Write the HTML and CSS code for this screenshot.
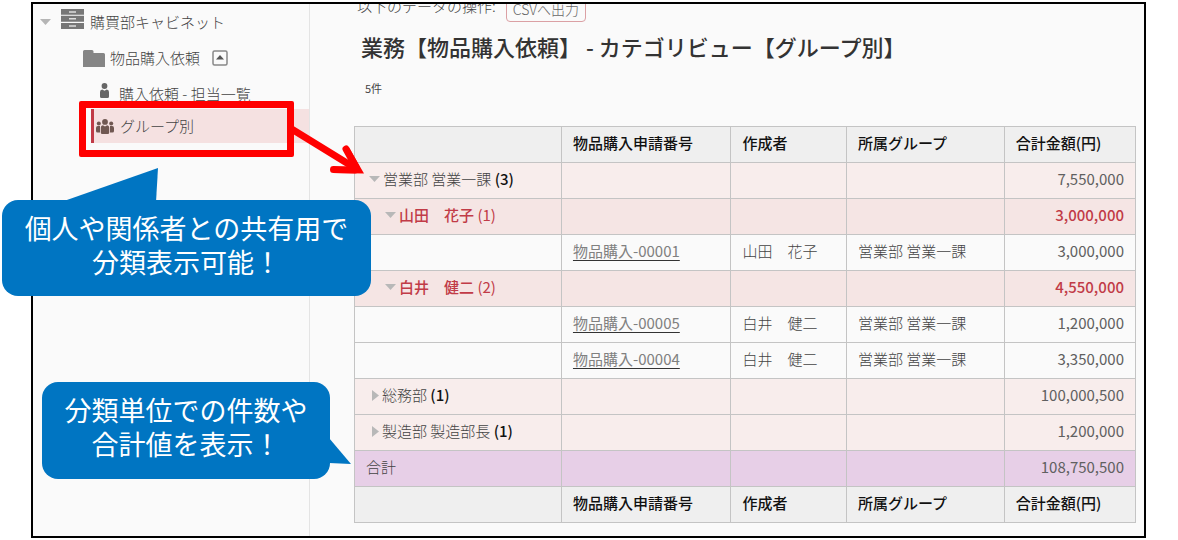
FILE: index.html
```html
<!DOCTYPE html>
<html lang="ja">
<head>
<meta charset="utf-8">
<title>業務【物品購入依頼】 - カテゴリビュー</title>
<link rel="stylesheet" href="styles.css">
</head>
<body>
<div class="stage">
  <div class="frame">
    <nav class="sidebar" aria-label="キャビネット">
      <a class="nav-item cabinet" href="#">
        <svg class="caret" width="11" height="6" viewBox="0 0 11 6"><path d="M0 0h11L5.500 6z" fill="#b5b5b5"/></svg>
        <svg class="icon-cabinet" width="23" height="20" viewBox="0 0 23 20"><path d="M0 0h23v5.800H0zM0 6.800h23v6H0zM0 14h23v6H0z" fill="#777"/><path d="M8 3h7M8 9.800h7M8 17h7" stroke="#ddd" stroke-width="1.500"/></svg>
        <span>購買部キャビネット</span>
      </a>
      <div class="nav-item folder">
        <svg width="22" height="17" viewBox="0 0 22 17"><path d="M0 1.500Q0 0 1.500 0H9q1.500 0 1.500 1.500V3H20.500Q22 3 22 4.500V17H0z" fill="#858585"/></svg>
        <a href="#">物品購入依頼</a>
        <button class="fold" type="button" aria-label="折りたたむ"><svg width="16" height="16" viewBox="0 0 16 16"><rect x="1" y="1" width="14" height="14" rx="1.500" fill="#fafafa" stroke="#888" stroke-width="1.500"/><path d="M4 9.500L8 5l4 4.500z" fill="#555"/></svg></button>
      </div>
      <a class="nav-item view" href="#">
        <svg class="person" width="9" height="15" viewBox="0 0 9 15" fill="#666"><circle cx="4.500" cy="3" r="2.900"/><path d="M0 9Q0 6.800 2.200 6.500L4.500 7.800l2.300-1.300Q9 6.800 9 9v4.500Q9 15 7.500 15h-6Q0 15 0 13.500z"/></svg>
        <span>購入依頼 - 担当一覧</span>
      </a>
      <a class="nav-item group" href="#" aria-current="page">
        <svg width="18" height="15" viewBox="0 0 18 15" fill="#705852"><circle cx="9" cy="2.900" r="2.900"/><circle cx="2.800" cy="4.500" r="2"/><circle cx="15.200" cy="4.500" r="2"/><path d="M4.800 8.500q0-2 2-2.200L9 7.600l2.200-1.300q2 .2 2 2.200v5q0 1.500-1.500 1.500H6.300q-1.500 0-1.500-1.500zM0 9q0-1.800 1.800-2H4v6.500H1.500Q0 13.500 0 12zM14 7h2.200q1.800.2 1.800 2v3q0 1.500-1.500 1.500H14z"/></svg>
        <span>グループ別</span>
      </a>
    </nav>
    <main class="content">
      <div class="toolbar"><span>以下のデータの操作:</span><button class="export" type="button">CSVへ出力</button></div>
      <h1 class="title">業務【物品購入依頼】 - カテゴリビュー【グループ別】</h1>
      <p class="count">5件</p>
      <table class="grid">
        <colgroup><col class="c-cat"><col class="c-no"><col class="c-author"><col class="c-group"><col class="c-sum"></colgroup>
        <thead><tr><th></th><th>物品購入申請番号</th><th>作成者</th><th>所属グループ</th><th>合計金額(円)</th></tr></thead>
        <tbody>
          <tr class="level1"><td class="cat"><svg class="down" width="11" height="6" viewBox="0 0 11 6"><path d="M0 0h11L5.500 6z"/></svg>営業部 営業一課 <b>(3)</b></td><td></td><td></td><td></td><td class="num">7,550,000</td></tr>
          <tr class="level2"><td class="cat"><svg class="down" width="11" height="6" viewBox="0 0 11 6"><path d="M0 0h11L5.500 6z"/></svg><b>山田　花子</b> (1)</td><td></td><td></td><td></td><td class="num">3,000,000</td></tr>
          <tr><td></td><td><a href="#">物品購入-00001</a></td><td>山田　花子</td><td>営業部 営業一課</td><td class="num">3,000,000</td></tr>
          <tr class="level2"><td class="cat"><svg class="down" width="11" height="6" viewBox="0 0 11 6"><path d="M0 0h11L5.500 6z"/></svg><b>白井　健二</b> (2)</td><td></td><td></td><td></td><td class="num">4,550,000</td></tr>
          <tr><td></td><td><a href="#">物品購入-00005</a></td><td>白井　健二</td><td>営業部 営業一課</td><td class="num">1,200,000</td></tr>
          <tr><td></td><td><a href="#">物品購入-00004</a></td><td>白井　健二</td><td>営業部 営業一課</td><td class="num">3,350,000</td></tr>
          <tr class="level1"><td class="cat"><svg class="right" width="7" height="11" viewBox="0 0 7 11"><path d="M0 0v11L7 5.500z"/></svg>総務部 <b>(1)</b></td><td></td><td></td><td></td><td class="num">100,000,500</td></tr>
          <tr class="level1"><td class="cat"><svg class="right" width="7" height="11" viewBox="0 0 7 11"><path d="M0 0v11L7 5.500z"/></svg>製造部 製造部長 <b>(1)</b></td><td></td><td></td><td></td><td class="num">1,200,000</td></tr>
          <tr class="total"><td>合計</td><td></td><td></td><td></td><td class="num">108,750,500</td></tr>
        </tbody>
        <tfoot><tr><th></th><th>物品購入申請番号</th><th>作成者</th><th>所属グループ</th><th>合計金額(円)</th></tr></tfoot>
      </table>
    </main>
  </div>
  <div class="highlight"></div>
  <svg class="arrow" width="84" height="60" viewBox="0 0 84 60"><path d="M5 10L70 50" stroke="#f00" stroke-width="7"/><path d="M48.500 51.500L70 52M61 31L71 49" fill="none" stroke="#f00" stroke-width="7" stroke-linecap="round"/><path d="M64 29.500L79 55.500L48 55L66 48z" fill="#f00"/></svg>
  <div class="callout callout-share">
    <svg class="tail" width="96" height="34" viewBox="0 0 96 34"><path d="M0 33L94 0L92 34H0z" fill="#0075c2"/></svg>
    個人や関係者との共有用で<br>分類表示可能！
  </div>
  <div class="callout callout-count">
    <svg class="tail" width="23" height="28" viewBox="0 0 23 28"><path d="M0 0L22 26L0 25z" fill="#0075c2"/></svg>
    分類単位での件数や<br>合計値を表示！
  </div>
</div>
</body>
</html>
```
FILE: styles.css
```css
* { box-sizing: border-box; }
body {
  margin: 0;
  background: #fff;
  color: #444;
  font: 300 15px/20px "Noto Sans CJK JP", sans-serif;
}
a { color: inherit; }
button { font: inherit; color: inherit; }
.stage { position: relative; padding: 2px 32px 2px 31px; }
.frame {
  display: flex;
  border: 2px solid #000;
  background: #fafafa;
}
.sidebar {
  flex: 0 0 277px;
  border-right: 1px solid #e4e4e4;
  padding-top: 2px;
}
.nav-item {
  display: flex;
  align-items: center;
  height: 36px;
  text-decoration: none;
  white-space: nowrap;
}
.nav-item a { text-decoration: none; }
.cabinet { padding-left: 7px; height: 32px; }
.icon-cabinet { margin: 0 6px 6px 10px; }
.folder { padding-left: 50px; gap: 5px; height: 40px; }
.fold { display: flex; margin-left: 7px; padding: 0; border: 0; background: none; }
.view { padding-left: 67px; gap: 10px; height: 31px; }
.person { margin-bottom: 6px; }
.group {
  margin-left: 58px;
  padding-left: 2px;
  gap: 6px;
  height: 34px;
  border-left: 3px solid #c13b47;
  background: #f5e1e1;
}
.content {
  flex: 1;
  min-width: 0;
  overflow: hidden;
  padding: 0 8px 13px 44px;
}
.toolbar { display: flex; gap: 10px; margin: -8px 0 0 3px; }
.export {
  height: 26px;
  padding: 0 6px;
  border: 1px solid #dba0a4;
  border-radius: 4px;
  background: transparent;
  font-size: 14px;
  line-height: 20px;
  color: #666;
}
.title {
  margin: 8px 0 0 7px;
  font-size: 22px;
  line-height: 32px;
  font-weight: 500;
  color: #333;
}
.count { margin: 16px 0 28px 11px; font-size: 11px; line-height: 20px; font-weight: 400; }
.grid { width: 100%; border-collapse: collapse; table-layout: fixed; }
.c-cat { width: 26.5%; }
.c-no { width: 21.7%; }
.c-author { width: 14.8%; }
.c-group { width: 20.2%; }
.c-sum { width: 16.8%; }
.grid th, .grid td {
  height: 36px;
  padding: 0 11px 3px;
  border: 1px solid #c4c4c4;
  text-align: left;
  white-space: nowrap;
}
.grid th { background: #efefef; color: #111; font-weight: 500; }
.grid a { color: #808080; font-weight: 400; text-decoration-color: #333; text-underline-offset: 3px; }
.grid td.num { text-align: right; color: #606060; font-weight: 400; }
.grid b { font-weight: 500; }
.level1 { background: #f8edec; }
.level1 b { color: #111; }
.level2 { background: #f5e5e4; color: #c13b47; }
.level2 .cat { font-weight: 400; }
.grid .level2 .num { color: #c13b47; font-weight: 500; }
.total { background: #e7cfe7; }
.cat svg { fill: #b8b8b8; margin-right: 3px; }
.down { margin-left: 3px; margin-bottom: 3px; }
.right { margin-left: 6px; }
.level2 .down { margin-left: 19px; }
.highlight {
  position: absolute;
  left: 79px;
  top: 101px;
  width: 215px;
  height: 56px;
  border: 7px solid #f00;
  border-radius: 2px;
}
.arrow { position: absolute; left: 285px; top: 118px; }
.callout {
  position: absolute;
  padding: 11px 0;
  border-radius: 16px;
  background: #0075c2;
  color: #fff;
  font-size: 27px;
  line-height: 34px;
  font-weight: 400;
  text-align: center;
  white-space: nowrap;
}
.callout-share { left: 2px; top: 200px; width: 369px; height: 96px; }
.callout-count { left: 42px; top: 382px; width: 288px; height: 97px; }
.tail { position: absolute; }
.callout-share .tail { left: 62px; top: -32px; }
.callout-count .tail { left: 287px; top: 56px; }
```
